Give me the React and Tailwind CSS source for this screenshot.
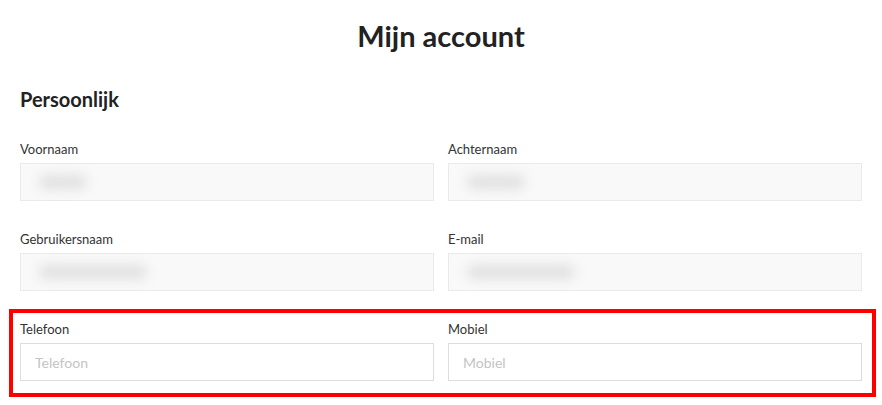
import React from "react";

const blurBox = (w) => (
  <span
    className="block h-[14px] rounded-full bg-[#e0e0e0] blur-[6px]"
    style={{ width: w }}
  />
);

function Field({ label, value, placeholder, blob }) {
  return (
    <div className="flex flex-col">
      <label className="text-[13px] leading-[16px] text-[#333] mb-[6px]">{label}</label>
      {blob ? (
        <div className="h-[38px] border border-[#eaeaea] bg-[#f9f9f9] flex items-center px-[18px]">
          {blurBox(blob)}
        </div>
      ) : (
        <input
          type="text"
          placeholder={placeholder}
          defaultValue={value}
          className="h-[38px] border border-[#dddddd] bg-white px-[14px] text-[14px] text-[#333] outline-none placeholder:text-[#c4c4c4]"
        />
      )}
    </div>
  );
}

export default function App() {
  return (
    <div
      className="min-h-screen bg-white px-[20px] pt-[18px]"
      style={{ fontFamily: "Lato, 'Liberation Sans', sans-serif" }}
    >
      <h1 className="text-center text-[29px] leading-[36px] font-bold text-[#222]">Mijn account</h1>

      <h2 className="mt-[33px] text-[20px] leading-[24px] font-bold text-[#222]">Persoonlijk</h2>

      <div className="mt-[30px] grid grid-cols-2 gap-x-[14px]">
        <Field label="Voornaam" blob={48} />
        <Field label="Achternaam" blob={58} />
      </div>

      <div className="mt-[30px] grid grid-cols-2 gap-x-[14px]">
        <Field label="Gebruikersnaam" blob={108} />
        <Field label="E-mail" blob={108} />
      </div>

      <div className="relative mt-[30px] grid grid-cols-2 gap-x-[14px]">
        <Field label="Telefoon" placeholder="Telefoon" />
        <Field label="Mobiel" placeholder="Mobiel" />
        <div className="pointer-events-none absolute left-[-11px] right-[-14px] top-[-12px] bottom-[-16px] border-[4px] border-[#ff0000]" />
      </div>
    </div>
  );
}
